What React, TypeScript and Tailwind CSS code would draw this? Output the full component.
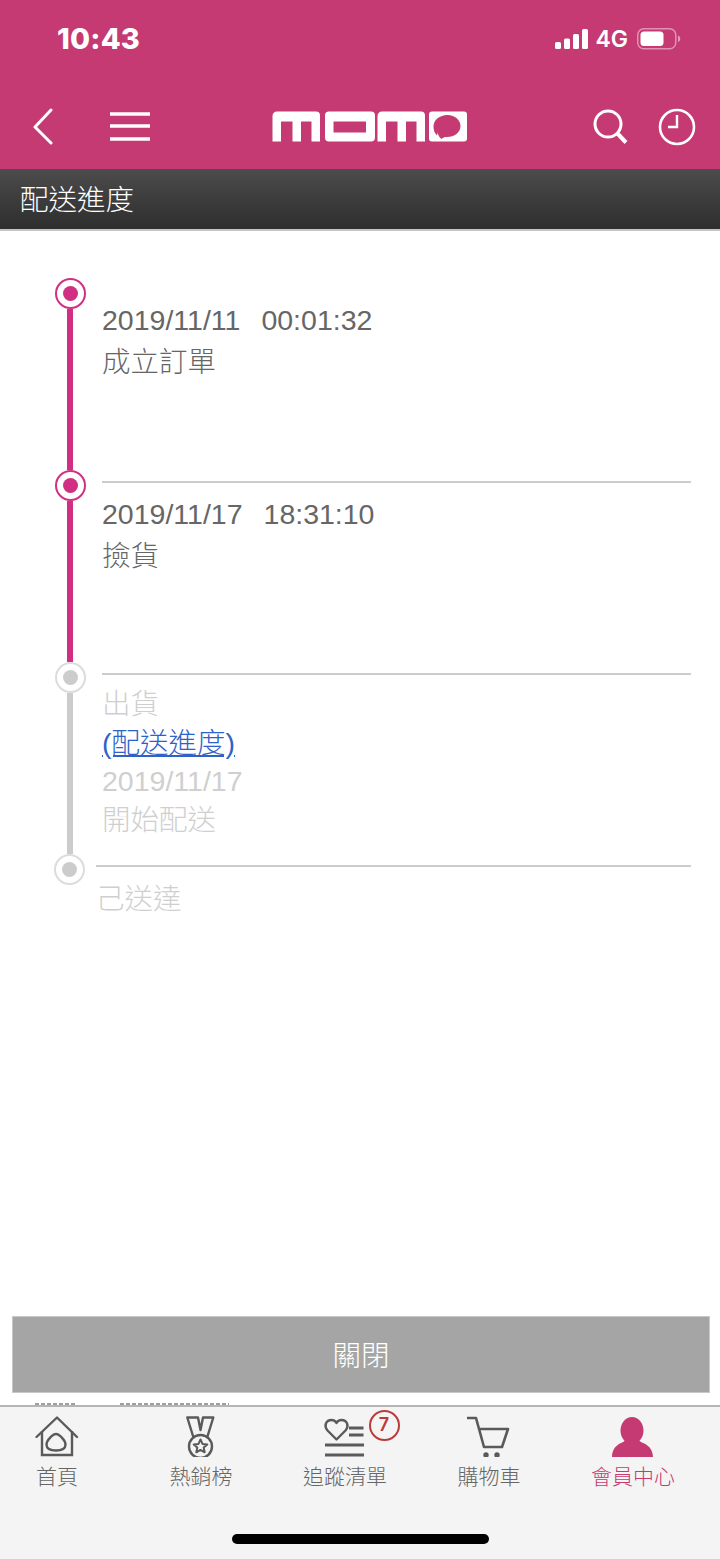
import React from "react";

const FONT = "font-['Liberation_Sans','Noto_Sans_CJK_TC',sans-serif]";

type Step = {
  active: boolean;
  last?: boolean;
  textPad: string;
  lines: React.ReactNode[];
};

const steps: Step[] = [
  {
    active: true,
    textPad: "pt-[10px]",
    lines: [
      <span>2019/11/11<span className="ml-[21px]">00:01:32</span></span>,
      <span className="block mt-[3px]">成立訂單</span>,
    ],
  },
  {
    active: true,
    textPad: "pt-[12px]",
    lines: [
      <span>2019/11/17<span className="ml-[21px]">18:31:10</span></span>,
      <span className="block mt-[3px]">撿貨</span>,
    ],
  },
  {
    active: false,
    textPad: "pt-[10px]",
    lines: [
      <span>出貨</span>,
      <a className="text-[#2f62c8] underline">(配送進度)</a>,
      <span>2019/11/17</span>,
      <span>開始配送</span>,
    ],
  },
  { active: false, last: true, textPad: "pt-[13px]", lines: [<span>己送達</span>] },
];

function Marker({ active }: { active: boolean }) {
  return (
    <div
      className={`flex h-[31px] w-[31px] shrink-0 items-center justify-center rounded-full border-2 bg-white ${
        active ? "border-[#d12f82]" : "border-[#dcdcdc]"
      }`}
    >
      <div className={`h-[15px] w-[15px] rounded-full ${active ? "bg-[#d12f82]" : "bg-[#cccccc]"}`} />
    </div>
  );
}

function TimelineRow({ step, first }: { step: Step; first: boolean }) {
  return (
    <div className={`flex ${step.last ? "pl-[54px]" : "h-[192px] pl-[55px]"}`}>
      <div className="flex w-[31px] shrink-0 flex-col items-center">
        <Marker active={step.active} />
        {!step.last && (
          <div className={`-ml-[1px] w-[6px] flex-1 ${step.active ? "bg-[#d12f82]" : "bg-[#cccccc]"}`} />
        )}
      </div>
      <div className={`mr-[29px] mt-[11px] flex-1 ${step.last ? "ml-[11px]" : "ml-[16px]"}`}>
        <div className={`h-[2px] ${first ? "" : "bg-[#cccccc]"}`} />
        <div
          className={`text-[28.500px] font-light leading-[38.7px] ${step.textPad} ${
            step.active ? "text-[#666666]" : "text-[#cfcfcf]"
          }`}
        >
          {step.lines.map((line, i) => (
            <div key={i}>{line}</div>
          ))}
        </div>
      </div>
    </div>
  );
}

function StatusBar() {
  return (
    <div className="flex h-[76px] items-start justify-between pl-[57px] pr-[39px] pt-[22px] text-white">
      <span className="font-['Inter',sans-serif] text-[29px] font-extrabold leading-[33px] tracking-[0.2px]">10:43</span>
      <div className="flex items-center pt-[5px]">
        <svg width="34" height="21" viewBox="0 0 34 21" fill="white" className="mr-[6px]">
          <rect x="0" y="13" width="6" height="7" rx="1.5" />
          <rect x="9" y="9.5" width="6" height="10.5" rx="1.5" />
          <rect x="18" y="5" width="6" height="15" rx="1.5" />
          <rect x="27" y="0" width="6" height="20" rx="1.5" />
        </svg>
        <span className="font-['Inter',sans-serif] text-[23px] font-semibold leading-[24px]">4G</span>
        <svg width="44" height="22" viewBox="0 0 44 22" fill="none" className="ml-[9px]">
          <rect x="0.75" y="0.75" width="38" height="20" rx="6" stroke="white" strokeOpacity="0.45" strokeWidth="1.5" />
          <rect x="3.5" y="3.5" width="23" height="14.5" rx="3.5" fill="white" />
          <path d="M41 7.5c1.5 .6 2.2 1.8 2.2 3.3s-.7 2.7-2.2 3.3z" fill="white" fillOpacity="0.5" />
        </svg>
      </div>
    </div>
  );
}

function MomoLogo() {
  return (
    <svg width="196" height="32" viewBox="0 0 196 32">
      <path
        fill="white"
        d="M5 0.500h39a4 4 0 0 1 4 4V30.500H39.500V10.500H29V30.500H20.500V10.500H9V30.500H0.500V5a4.500 4.500 0 0 1 4.500-4.500z"
      />
      <path
        fillRule="evenodd"
        fill="white"
        d="M57 0.500h42a4 4 0 0 1 4 4V26.500a4 4 0 0 1-4 4H57a4 4 0 0 1-4-4V4.500a4 4 0 0 1 4-4zM61.500 10.500V21.500H94V10.500z"
      />
      <path
        fill="white"
        d="M110 0.500h39a4 4 0 0 1 4 4V30.500H144.500V10.500H134V30.500H125.500V10.500H114V30.500H105.500V5a4.500 4.500 0 0 1 4.500-4.500z"
      />
      <path
        fillRule="evenodd"
        fill="white"
        d="M160 0.500h32a3 3 0 0 1 3 3V27.500a3 3 0 0 1-3 3H160a3 3 0 0 1-3-3V3.500a3 3 0 0 1 3-3zM175.500 4C183 4 188.500 9 188.500 15C188.500 21.500 182.500 26 175 26C172.500 26 171 26.500 169.500 28C167.500 26.500 166 24.500 165.800 21.500L165 24.500C162.500 22 161.500 19 161.500 15.500C161.500 9 167.500 4 175.500 4z"
      />
    </svg>
  );
}

function TopBar() {
  return (
    <div className="flex h-[93px] items-start justify-between px-[32px]">
      <div className="flex items-start">
        <svg width="22" height="38" viewBox="0 0 22 38" fill="none" stroke="white" strokeWidth="3" strokeLinecap="round" strokeLinejoin="round" className="mt-[32px]">
          <polyline points="19,2 3,19 19,35" />
        </svg>
        <svg width="42" height="30" viewBox="0 0 42 30" fill="none" stroke="white" strokeWidth="3.4" className="ml-[55px] mt-[36px]">
          <line x1="1" y1="2" x2="41" y2="2" />
          <line x1="1" y1="14" x2="41" y2="14" />
          <line x1="1" y1="27" x2="41" y2="27" />
        </svg>
      </div>
      <div className="mr-[3px] mt-[34.500px]">
        <MomoLogo />
      </div>
      <div className="-mr-[8px] flex items-start">
        <svg width="38" height="38" viewBox="0 0 38 38" fill="none" stroke="white" className="mt-[32px]">
          <circle cx="16" cy="16" r="13" strokeWidth="3" />
          <line x1="25" y1="25" x2="34" y2="34.500" strokeWidth="4" />
        </svg>
        <svg width="38" height="38" viewBox="0 0 38 38" fill="none" stroke="white" className="ml-[28px] mt-[32px]">
          <circle cx="19" cy="19" r="17" strokeWidth="2.600" />
          <polyline points="19,7 19,19 10,19" strokeWidth="2.400" />
        </svg>
      </div>
    </div>
  );
}

function HomeIcon() {
  return (
    <svg width="60" height="42" viewBox="0 0 60 42" fill="none" stroke="#5a5a5a" strokeWidth="2.400">
      <polyline points="9.500,22 30,2.500 50,22" strokeLinejoin="round" strokeLinecap="round" />
      <polyline points="15,16 15,40 45,40 45,16" />
      <path d="M29 19c3 0 9.500 6 9.500 10.500c0 4-4 6-9.500 6s-9.500-2-9.500-6C19.500 25 26 19 29 19z" />
    </svg>
  );
}

function MedalIcon() {
  return (
    <svg width="60" height="42" viewBox="0 0 60 42" fill="none" stroke="#5a5a5a" strokeWidth="2.400" strokeLinejoin="round">
      <path d="M22.300 22L16.300 2.500H27L29.500 15L32 2.500H42.300L36.300 22" />
      <circle cx="29.500" cy="31.500" r="11.500" />
      <path strokeWidth="2" d="M29.500 24.500l2 4.400 4.800.5-3.600 3.200 1 4.700-4.200-2.400-4.200 2.400 1-4.700-3.600-3.200 4.800-.5z" />
    </svg>
  );
}

function HeartListIcon() {
  return (
    <svg width="60" height="42" viewBox="0 0 60 42" fill="none" stroke="#5a5a5a" strokeWidth="2.400">
      <path
        strokeLinejoin="round"
        d="M21.500 24.500L12.500 15.500C8.500 11 11 5 16.500 5C19 5 20.500 6 21.500 8C22.500 6 24 5 26.500 5C32 5 34.500 11 30.500 15.500z"
      />
      <line x1="34" y1="13" x2="48.500" y2="13" strokeWidth="3" />
      <line x1="34" y1="20" x2="48.500" y2="20" strokeWidth="3" />
      <line x1="10" y1="30" x2="49" y2="30" strokeWidth="3" />
      <line x1="10" y1="40" x2="49" y2="40" strokeWidth="3" />
    </svg>
  );
}

function CartIcon() {
  return (
    <svg width="60" height="42" viewBox="0 0 60 42" fill="none" stroke="#5a5a5a" strokeWidth="2.600" strokeLinejoin="round">
      <polyline points="8,3 17,3 25,32 43,32 49,14 19.500,14" />
      <circle cx="27" cy="40" r="2.700" fill="#5a5a5a" stroke="none" />
      <circle cx="38" cy="40" r="2.700" fill="#5a5a5a" stroke="none" />
    </svg>
  );
}

function PersonIcon() {
  return (
    <svg width="60" height="42" viewBox="0 0 60 42" fill="#c53a72">
      <ellipse cx="29" cy="15.500" rx="11.500" ry="13.500" />
      <path d="M22 25C21 28.500 9.500 28 9 42H50C49.500 28 37 28.500 36 25z" />
    </svg>
  );
}

const tabs = [
  { label: "首頁", icon: <HomeIcon /> },
  { label: "熱銷榜", icon: <MedalIcon /> },
  { label: "追蹤清單", icon: <HeartListIcon />, badge: "7" },
  { label: "購物車", icon: <CartIcon /> },
  { label: "會員中心", icon: <PersonIcon />, current: true },
];

function BottomNav() {
  return (
    <nav className="flex h-[154px] flex-col border-t-2 border-[#b4b4b4] bg-[#f4f4f4]">
      <div className="-ml-[15px] grid grid-cols-[repeat(5,144px)] pt-[8px]">
        {tabs.map((tab) => (
          <div key={tab.label} className="relative flex flex-col items-center">
            {tab.icon}
            {tab.badge && (
              <span className="absolute left-[95.500px] top-[-5.500px] flex h-[31px] w-[31px] items-center justify-center rounded-full border-2 border-[#bb3a3a] font-['Inter',sans-serif] text-[18px] font-semibold leading-none text-[#bb3a3a]">
                {tab.badge}
              </span>
            )}
            <span className={`mt-[6px] text-[21px] font-light leading-[28px] ${tab.current ? "text-[#c53a72]" : "text-[#666666]"}`}>
              {tab.label}
            </span>
          </div>
        ))}
      </div>
      <div className="mx-auto mb-[15px] mt-auto h-[10px] w-[257px] rounded-full bg-black" />
    </nav>
  );
}

export default function App() {
  return (
    <div className={`flex h-[1559px] w-[720px] flex-col overflow-hidden bg-white ${FONT}`}>
      <header className="bg-[#c53a72]">
        <StatusBar />
        <TopBar />
      </header>
      <div className="flex h-[62px] items-center border-b-2 border-[#c4c4c4] bg-gradient-to-b from-[#4c4c4c] to-[#2e2e2e] pl-[20px] pt-[3px] text-[28.500px] font-light leading-none text-white">
        配送進度
      </div>
      <main className="flex-1 pt-[47px]">
        {steps.map((step, i) => (
          <TimelineRow key={i} step={step} first={i === 0} />
        ))}
      </main>
      <div className="pl-[12px] pr-[10px]">
        <button className="flex h-[77px] w-full items-center justify-center border border-[#c8c8c8] bg-[#a5a5a5] pt-[3px] text-[28.500px] font-light leading-none text-white">
          關閉
        </button>
      </div>
      {/* sliver of the page content scrolled behind the tab bar */}
      <svg width="720" height="12" viewBox="0 0 720 12" className="block shrink-0">
        <line x1="35" y1="11" x2="77" y2="11" stroke="#808080" strokeWidth="1.500" strokeDasharray="4 2" />
        <line x1="120" y1="11" x2="229" y2="11" stroke="#808080" strokeWidth="1.500" strokeDasharray="4 2" />
      </svg>
      <BottomNav />
    </div>
  );
}
